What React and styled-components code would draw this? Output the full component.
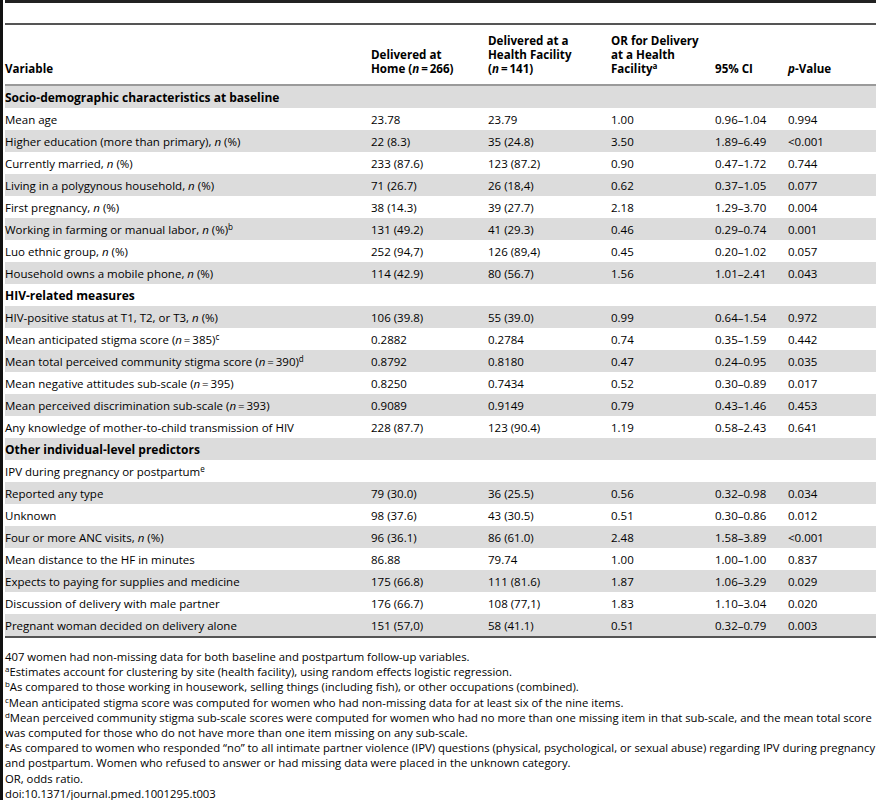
import React from 'react';
import styled, { createGlobalStyle } from 'styled-components';

const Global = createGlobalStyle`
  html, body { margin: 0; padding: 0; background: #fff; }
  body { font-family: "Open Sans", "Liberation Sans", sans-serif; color: #000; }
`;

const Page = styled.div`
  box-sizing: border-box;
  min-height: 800px;
  border-left: 3px solid #111;
  padding-left: 2px;
  font-size: 11.5px;
`;

const TopRule = styled.div`
  height: 3px;
  background: #222;
`;

const Gap = styled.div`
  height: 20px;
`;

const HeadRule = styled.div`
  height: 2px;
  background: #555;
`;

const COLS = '361px 117px 123px 104px 73px 1fr';

const HeaderRow = styled.div`
  display: grid;
  grid-template-columns: ${COLS};
  align-items: end;
  padding: 9px 0 8px;
  border-bottom: 2px solid #9a9a9a;
  font-weight: 700;
  font-size: 11.6px;
  line-height: 14px;
`;

const HeadCell = styled.div`
  padding-left: ${p => (p.$first ? '0' : '5px')};
`;

const Row = styled.div`
  display: grid;
  grid-template-columns: ${COLS};
  align-items: center;
  height: 22px;
  background: ${p => (p.$shade ? '#dcdcdc' : '#fff')};
  white-space: nowrap;
`;

const Cell = styled.div`
  padding-left: ${p => (p.$first ? '0' : '5px')};
`;

const SectionCell = styled.div`
  grid-column: 1 / -1;
  font-weight: 700;
  font-size: 12px;
`;

const BottomRule = styled.div`
  height: 2px;
  background: #555;
`;

const Notes = styled.div`
  padding-top: 11px;
  line-height: 15.2px;
  font-size: 11.3px;
`;

const NoteLine = styled.div`
  white-space: nowrap;
`;

const Sup = styled.sup`
  font-size: 0.7em;
  line-height: 0;
  vertical-align: 0.45em;
`;

const Em = styled.i`
  font-style: italic;
`;

const n = <Em>n</Em>;
const npct = <>{n} (%)</>;
const eq = '\u2009=\u2009';

const rows = [
  { section: 'Socio-demographic characteristics at baseline' },
  { label: 'Mean age', v: ['23.78', '23.79', '1.00', '0.96–1.04', '0.994'] },
  { label: <>Higher education (more than primary), {npct}</>, v: ['22 (8.3)', '35 (24.8)', '3.50', '1.89–6.49', '<0.001'] },
  { label: <>Currently married, {npct}</>, v: ['233 (87.6)', '123 (87.2)', '0.90', '0.47–1.72', '0.744'] },
  { label: <>Living in a polygynous household, {npct}</>, v: ['71 (26.7)', '26 (18,4)', '0.62', '0.37–1.05', '0.077'] },
  { label: <>First pregnancy, {npct}</>, v: ['38 (14.3)', '39 (27.7)', '2.18', '1.29–3.70', '0.004'] },
  { label: <>Working in farming or manual labor, {npct}<Sup>b</Sup></>, v: ['131 (49.2)', '41 (29.3)', '0.46', '0.29–0.74', '0.001'] },
  { label: <>Luo ethnic group, {npct}</>, v: ['252 (94,7)', '126 (89,4)', '0.45', '0.20–1.02', '0.057'] },
  { label: <>Household owns a mobile phone, {npct}</>, v: ['114 (42.9)', '80 (56.7)', '1.56', '1.01–2.41', '0.043'] },
  { section: 'HIV-related measures' },
  { label: <>HIV-positive status at T1, T2, or T3, {npct}</>, v: ['106 (39.8)', '55 (39.0)', '0.99', '0.64–1.54', '0.972'] },
  { label: <>Mean anticipated stigma score ({n}{eq}385)<Sup>c</Sup></>, v: ['0.2882', '0.2784', '0.74', '0.35–1.59', '0.442'] },
  { label: <>Mean total perceived community stigma score ({n}{eq}390)<Sup>d</Sup></>, v: ['0.8792', '0.8180', '0.47', '0.24–0.95', '0.035'] },
  { label: <>Mean negative attitudes sub-scale ({n}{eq}395)</>, v: ['0.8250', '0.7434', '0.52', '0.30–0.89', '0.017'] },
  { label: <>Mean perceived discrimination sub-scale ({n}{eq}393)</>, v: ['0.9089', '0.9149', '0.79', '0.43–1.46', '0.453'] },
  { label: 'Any knowledge of mother-to-child transmission of HIV', v: ['228 (87.7)', '123 (90.4)', '1.19', '0.58–2.43', '0.641'] },
  { section: 'Other individual-level predictors' },
  { label: <>IPV during pregnancy or postpartum<Sup>e</Sup></>, v: ['', '', '', '', ''] },
  { label: 'Reported any type', v: ['79 (30.0)', '36 (25.5)', '0.56', '0.32–0.98', '0.034'] },
  { label: 'Unknown', v: ['98 (37.6)', '43 (30.5)', '0.51', '0.30–0.86', '0.012'] },
  { label: <>Four or more ANC visits, {npct}</>, v: ['96 (36.1)', '86 (61.0)', '2.48', '1.58–3.89', '<0.001'] },
  { label: 'Mean distance to the HF in minutes', v: ['86.88', '79.74', '1.00', '1.00–1.00', '0.837'] },
  { label: 'Expects to paying for supplies and medicine', v: ['175 (66.8)', '111 (81.6)', '1.87', '1.06–3.29', '0.029'] },
  { label: 'Discussion of delivery with male partner', v: ['176 (66.7)', '108 (77,1)', '1.83', '1.10–3.04', '0.020'] },
  { label: 'Pregnant woman decided on delivery alone', v: ['151 (57,0)', '58 (41.1)', '0.51', '0.32–0.79', '0.003'] },
];

export default function App() {
  return (
    <>
      <Global />
      <Page>
        <TopRule />
        <Gap />
        <HeadRule />
        <HeaderRow>
          <HeadCell $first>Variable</HeadCell>
          <HeadCell>Delivered at<br />Home ({n}{eq}266)</HeadCell>
          <HeadCell>Delivered at a<br />Health Facility<br />({n}{eq}141)</HeadCell>
          <HeadCell>OR for Delivery<br />at a Health<br />Facility<Sup>a</Sup></HeadCell>
          <HeadCell>95% CI</HeadCell>
          <HeadCell><Em>p</Em>-Value</HeadCell>
        </HeaderRow>
        {rows.map((r, i) => (
          <Row key={i} $shade={i % 2 === 0}>
            {r.section ? (
              <SectionCell>{r.section}</SectionCell>
            ) : (
              <>
                <Cell $first>{r.label}</Cell>
                {r.v.map((x, j) => (
                  <Cell key={j}>{x}</Cell>
                ))}
              </>
            )}
          </Row>
        ))}
        <BottomRule />
        <Notes>
          <NoteLine>407 women had non-missing data for both baseline and postpartum follow-up variables.</NoteLine>
          <NoteLine><Sup>a</Sup>Estimates account for clustering by site (health facility), using random effects logistic regression.</NoteLine>
          <NoteLine><Sup>b</Sup>As compared to those working in housework, selling things (including fish), or other occupations (combined).</NoteLine>
          <NoteLine><Sup>c</Sup>Mean anticipated stigma score was computed for women who had non-missing data for at least six of the nine items.</NoteLine>
          <NoteLine><Sup>d</Sup>Mean perceived community stigma sub-scale scores were computed for women who had no more than one missing item in that sub-scale, and the mean total score</NoteLine>
          <NoteLine>was computed for those who do not have more than one item missing on any sub-scale.</NoteLine>
          <NoteLine><Sup>e</Sup>As compared to women who responded “no” to all intimate partner violence (IPV) questions (physical, psychological, or sexual abuse) regarding IPV during pregnancy</NoteLine>
          <NoteLine>and postpartum. Women who refused to answer or had missing data were placed in the unknown category.</NoteLine>
          <NoteLine>OR, odds ratio.</NoteLine>
          <NoteLine>doi:10.1371/journal.pmed.1001295.t003</NoteLine>
        </Notes>
      </Page>
    </>
  );
}
